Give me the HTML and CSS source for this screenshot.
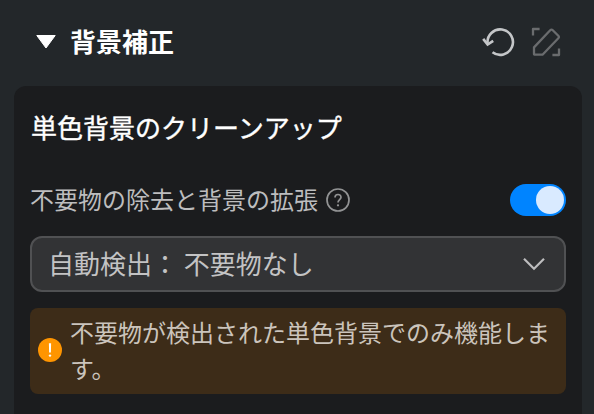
FILE: index.html
```html
<!DOCTYPE html>
<html lang="ja">
<head>
<meta charset="utf-8">
<title>背景補正</title>
<link rel="stylesheet" href="styles.css">
</head>
<body>
<header class="header">
  <svg class="caret" width="20" height="14" viewBox="0 0 20 14"><path d="M.8.5h18.4L10 13Z" fill="#fff" stroke="#fff" stroke-width="1" stroke-linejoin="round"/></svg>
  <h1 class="title">背景補正</h1>
  <svg class="icon reset" width="34" height="32" viewBox="0 0 34 32" fill="none"><path d="M5.6 17.5A12.7 12.7 0 1 1 10.5 26.2" stroke="#c4c6c8" stroke-width="2.6"/><path d="M1.2 12.9 5.6 18.6 11.2 14.8" stroke="#c4c6c8" stroke-width="2.6"/></svg>
  <svg class="icon edit" width="30" height="30" viewBox="0 0 30 30" fill="none" stroke="#6a6c6e" stroke-width="2.3" stroke-linejoin="round"><path d="M2 8.6V2H8.6M28 21.4v6.6h-6.6M3 27V20.4L19.2 3.3Q20.5 2 21.8 3.3L27.3 8.7Q28.6 10 27.3 11.3L11.5 27.7H4.2Q3 27.7 3 27Z"/></svg>
</header>
<main class="panel">
  <h2 class="subtitle">単色背景のクリーンアップ</h2>
  <div class="row">
    <span class="label">不要物の除去と背景の拡張</span>
    <svg class="help" width="24" height="24" viewBox="0 0 24 24" fill="none" stroke="#929394"><circle cx="12" cy="12" r="11" stroke-width="1.7"/><path d="M9 9.4C9 5.5 15 5.6 15 9.2c0 2.4-3 2.5-3 5.3" stroke-width="1.7"/><circle cx="12" cy="17.3" r="1.15" fill="#929394" stroke="none"/></svg>
    <span class="toggle"><span class="knob"></span></span>
  </div>
  <div class="select">
    <span class="value">自動検出： 不要物なし</span>
    <svg width="24" height="14" viewBox="0 0 24 14" fill="none"><path d="m2 1.8 10 10 10-10" stroke="#bdbdbe" stroke-width="2.2"/></svg>
  </div>
  <div class="notice">
    <svg class="warn" width="24" height="24" viewBox="0 0 24 24"><circle cx="12" cy="12" r="12" fill="#ff9500"/><path d="M10.9 5.2h2.2l-.2 9.2h-1.8Z" fill="#fff"/><circle cx="12" cy="17.6" r="1.2" fill="#fff"/></svg>
    <p>不要物が検出された単色背景でのみ機能します。</p>
  </div>
</main>
</body>
</html>
```

FILE: styles.css
```css
* { box-sizing: border-box; }
body {
  margin: 0;
  height: 414px;
  overflow: hidden;
  display: flex;
  flex-direction: column;
  background: #23272a;
  color: #bdbdbe;
  font-family: "Noto Sans CJK JP", sans-serif;
  font-size: 24px;
}
svg { display: block; flex: none; }
h1, h2, p { margin: 0; }
.header {
  height: 86px;
  padding: 0 33px 2px 36px;
  display: flex;
  align-items: center;
}
.title {
  margin-left: 14px;
  padding-bottom: 2px;
  color: #fff;
  font-size: 26px;
  line-height: 38px;
  font-weight: 700;
}
.reset { margin-left: auto; }
.edit { margin-left: 15px; }
.panel {
  flex: 1;
  margin: 0 12px 0 14px;
  padding: 21px 16px 0;
  border-radius: 12px 12px 0 0;
  background: #1b1c1e;
}
.subtitle {
  padding-left: 1px;
  color: #fff;
  font-size: 26px;
  line-height: 40px;
  font-weight: 400;
  -webkit-text-stroke: 0.4px #fff;
}
.row {
  height: 36px;
  margin-top: 35px;
  display: flex;
  align-items: center;
}
.label { padding-bottom: 3px; }
.help { margin-left: 8px; }
.toggle {
  width: 56px;
  height: 32px;
  margin-left: auto;
  padding: 2px;
  display: flex;
  justify-content: flex-end;
  border-radius: 16px;
  background: #0084ff;
}
.knob {
  width: 28px;
  height: 28px;
  border-radius: 50%;
  background: #d9eaff;
}
.select {
  height: 56px;
  margin-top: 18px;
  padding: 0 18px 0 16px;
  display: flex;
  align-items: center;
  justify-content: space-between;
  border: 2px solid #505153;
  border-radius: 12px;
  background: #323335;
  color: #c3c3c4;
  font-size: 26px;
}
.value { padding-bottom: 3px; }
.notice {
  height: 86px;
  margin-top: 16px;
  padding: 6px 8px 8px;
  display: flex;
  align-items: center;
  gap: 8px;
  border-radius: 8px;
  background: #3d2c18;
  color: #cbc4bc;
  line-height: 36px;
}
.notice p { width: 488px; }
```
